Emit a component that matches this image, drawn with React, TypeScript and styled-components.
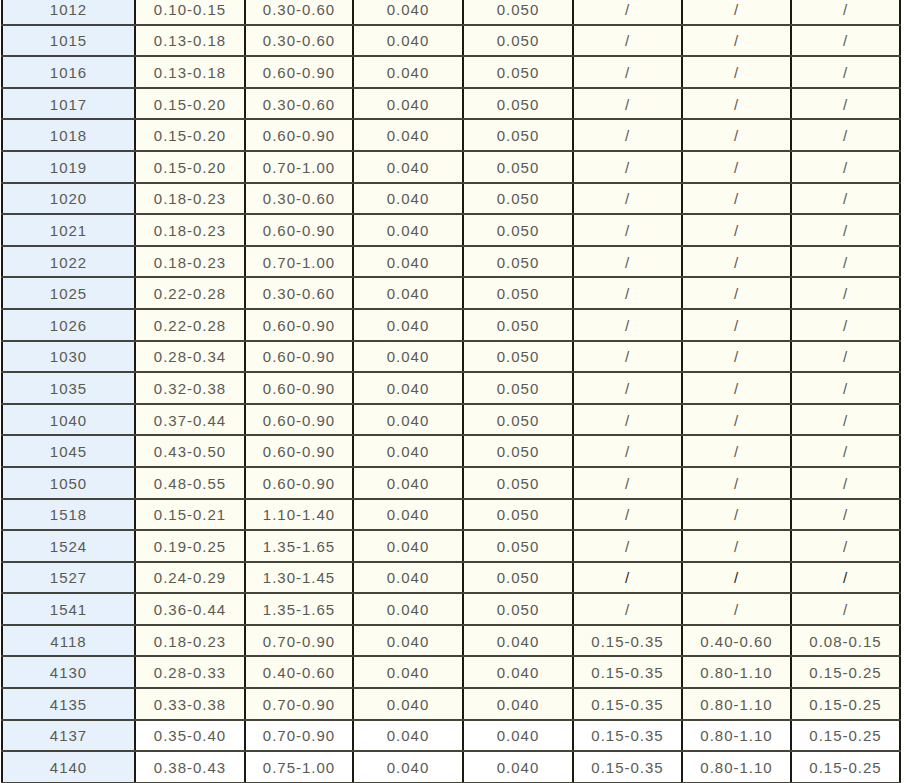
import React from 'react';
import styled, { createGlobalStyle } from 'styled-components';

const GlobalStyle = createGlobalStyle`
  html, body {
    margin: 0;
    padding: 0;
    background: #ffffff;
    overflow: hidden;
  }
`;

type Row = [string, string, string, string, string, string, string, string];

const rows: Row[] = [
  ['1012', '0.10-0.15', '0.30-0.60', '0.040', '0.050', '/', '/', '/'],
  ['1015', '0.13-0.18', '0.30-0.60', '0.040', '0.050', '/', '/', '/'],
  ['1016', '0.13-0.18', '0.60-0.90', '0.040', '0.050', '/', '/', '/'],
  ['1017', '0.15-0.20', '0.30-0.60', '0.040', '0.050', '/', '/', '/'],
  ['1018', '0.15-0.20', '0.60-0.90', '0.040', '0.050', '/', '/', '/'],
  ['1019', '0.15-0.20', '0.70-1.00', '0.040', '0.050', '/', '/', '/'],
  ['1020', '0.18-0.23', '0.30-0.60', '0.040', '0.050', '/', '/', '/'],
  ['1021', '0.18-0.23', '0.60-0.90', '0.040', '0.050', '/', '/', '/'],
  ['1022', '0.18-0.23', '0.70-1.00', '0.040', '0.050', '/', '/', '/'],
  ['1025', '0.22-0.28', '0.30-0.60', '0.040', '0.050', '/', '/', '/'],
  ['1026', '0.22-0.28', '0.60-0.90', '0.040', '0.050', '/', '/', '/'],
  ['1030', '0.28-0.34', '0.60-0.90', '0.040', '0.050', '/', '/', '/'],
  ['1035', '0.32-0.38', '0.60-0.90', '0.040', '0.050', '/', '/', '/'],
  ['1040', '0.37-0.44', '0.60-0.90', '0.040', '0.050', '/', '/', '/'],
  ['1045', '0.43-0.50', '0.60-0.90', '0.040', '0.050', '/', '/', '/'],
  ['1050', '0.48-0.55', '0.60-0.90', '0.040', '0.050', '/', '/', '/'],
  ['1518', '0.15-0.21', '1.10-1.40', '0.040', '0.050', '/', '/', '/'],
  ['1524', '0.19-0.25', '1.35-1.65', '0.040', '0.050', '/', '/', '/'],
  ['1527', '0.24-0.29', '1.30-1.45', '0.040', '0.050', '/', '/', '/'],
  ['1541', '0.36-0.44', '1.35-1.65', '0.040', '0.050', '/', '/', '/'],
  ['4118', '0.18-0.23', '0.70-0.90', '0.040', '0.040', '0.15-0.35', '0.40-0.60', '0.08-0.15'],
  ['4130', '0.28-0.33', '0.40-0.60', '0.040', '0.040', '0.15-0.35', '0.80-1.10', '0.15-0.25'],
  ['4135', '0.33-0.38', '0.70-0.90', '0.040', '0.040', '0.15-0.35', '0.80-1.10', '0.15-0.25'],
  ['4137', '0.35-0.40', '0.70-0.90', '0.040', '0.040', '0.15-0.35', '0.80-1.10', '0.15-0.25'],
  ['4140', '0.38-0.43', '0.75-1.00', '0.040', '0.040', '0.15-0.35', '0.80-1.10', '0.15-0.25'],
];

const widths = [133, 110, 108, 110, 110, 109, 109, 109];

const Page = styled.div`
  margin-top: -8px;
  padding-left: 1px;
`;

const Table = styled.table`
  border-collapse: collapse;
  table-layout: fixed;
  width: 900px;
  font-family: 'Liberation Sans', Arial, sans-serif;
  font-size: 15px;
  letter-spacing: 1px;
  color: #5a5a55;
`;

const Tr = styled.tr`
  height: 31.6px;
`;

const Cell = styled.td<{ $kind: 'grade' | 'cream' | 'white'; $strong?: boolean }>`
  padding: 0;
  padding-top: 1px;
  text-align: center;
  vertical-align: middle;
  border-top: 2px solid #45443a;
  border-bottom: 2px solid #45443a;
  border-left: 2px solid #1b1a12;
  border-right: 2px solid #1b1a12;
  background: ${(p) =>
    p.$kind === 'grade' ? '#e7f1fb' : p.$kind === 'cream' ? '#fefdf1' : '#ffffff'};
  color: ${(p) => (p.$strong ? '#222' : '#5a5a55')};
`;

export default function App() {
  return (
    <Page>
      <GlobalStyle />
      <Table>
        <colgroup>
          {widths.map((w, i) => (
            <col key={i} style={{ width: w }} />
          ))}
        </colgroup>
        <tbody>
          {rows.map((r, ri) => (
            <Tr key={r[0]}>
              {r.map((v, ci) => (
                <Cell
                  key={ci}
                  $kind={ci === 0 ? 'grade' : ri >= 23 ? 'white' : 'cream'}
                  $strong={r[0] === '1527' && v === '/'}
                >
                  {v}
                </Cell>
              ))}
            </Tr>
          ))}
        </tbody>
      </Table>
    </Page>
  );
}
